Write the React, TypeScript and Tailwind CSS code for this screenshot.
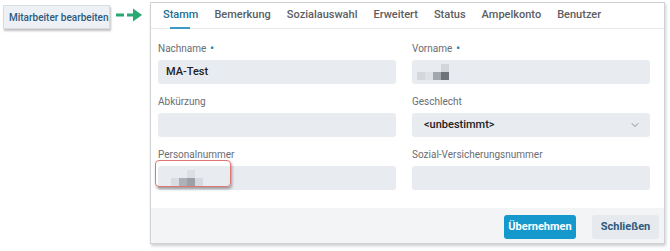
import { ChevronDown } from 'lucide-react';

const tabs = ['Stamm', 'Bemerkung', 'Sozialauswahl', 'Erweitert', 'Status', 'Ampelkonto', 'Benutzer'];

// pixelated "blurred" value, cells of 8px
function Blur({ cells }: { cells: (string | null)[][] }) {
  return (
    <div className="flex flex-col">
      {cells.map((row, i) => (
        <div key={i} className="flex">
          {row.map((c, j) => (
            <div key={j} className="w-[8px] h-[8px]" style={{ background: c ?? 'transparent' }} />
          ))}
        </div>
      ))}
    </div>
  );
}

function Label({ text, required }: { text: string; required?: boolean }) {
  return (
    <div className="h-[14px] leading-[14px] text-[10px] text-[#6a6d72] mb-[4px] whitespace-nowrap">
      {text}
      {required && <span className="text-[#1d7ba6] ml-[4px] font-bold">•</span>}
    </div>
  );
}

export default function App() {
  return (
    <div className="w-[670px] h-[251px] bg-white flex font-['Roboto',sans-serif] overflow-hidden">
      {/* ─── Callout ─────────────────────────────────────────── */}
      <div className="w-[150px] shrink-0 flex items-start pt-[5px] pl-[3px]">
        <div className="h-[24px] w-[107px] shrink-0 bg-[#edf1f5] border border-[#d9dde2] shadow-[1px_2px_2px_rgba(0,0,0,0.25)] flex items-center pl-[5px] text-[10px] font-medium text-[#2c5a80] whitespace-nowrap">
          Mitarbeiter bearbeiten
        </div>
        <svg width="30" height="14" viewBox="0 0 30 14" className="ml-[6px] mt-[3px] shrink-0">
          <rect x="0" y="5.5" width="8" height="3" fill="#2aa873" />
          <rect x="11" y="5.5" width="8" height="3" fill="#2aa873" />
          <polygon points="17,0.5 26,7 17,13.5" fill="#2aa873" />
        </svg>
      </div>

      {/* ─── Dialog ──────────────────────────────────────────── */}
      <div className="mt-[2px] w-[515px] h-[242px] border border-[#cfd1d4] shadow-[1px_2px_3px_rgba(0,0,0,0.2)] flex flex-col">
        <div className="h-[26px] border-b border-[#e8eaec] flex items-stretch pl-[12px] gap-[16px]">
          {tabs.map((t, i) => (
            <div
              key={t}
              className={
                'relative flex items-center text-[11px] font-medium pb-[1px] ' +
                (i === 0 ? 'text-[#236f94]' : 'text-[#5b5e63]')
              }
            >
              {t}
              {i === 0 && <div className="absolute bottom-[-1px] left-[7px] right-[8px] h-[2px] bg-[#3d9bc6]" />}
            </div>
          ))}
        </div>

        <div className="grid grid-cols-2 gap-x-[16px] gap-y-[11px] pl-[7px] pr-[14px] pt-[13px]">
          <div>
            <Label text="Nachname" required />
            <div className="h-[24px] rounded-[3px] bg-[#e8ebef] flex items-center pl-[8px] text-[11px] font-medium text-[#222]">
              MA-Test
            </div>
          </div>
          <div>
            <Label text="Vorname" required />
            <div className="h-[24px] rounded-[3px] bg-[#e8ebef] flex items-center pl-[5px]">
              <Blur
                cells={[
                  [null, null, null, '#d3d6da'],
                  ['#d4d7db', '#dfe2e5', '#a3a7ad', '#6f747b'],
                ]}
              />
            </div>
          </div>
          <div>
            <Label text="Abkürzung" />
            <div className="h-[24px] rounded-[3px] bg-[#e8ebef]" />
          </div>
          <div>
            <Label text="Geschlecht" />
            <div className="h-[24px] rounded-[3px] bg-[#e8ebef] flex items-center justify-between pl-[12px] pr-[9px] text-[11px] font-medium text-[#222]">
              &lt;unbestimmt&gt;
              <ChevronDown className="w-[12px] h-[12px] text-[#777]" strokeWidth={1.6} />
            </div>
          </div>
          <div>
            <Label text="Personalnummer" />
            <div className="relative h-[24px] rounded-[3px] bg-[#e8ebef] flex items-center pl-[13px]">
              <Blur
                cells={[
                  [null, null, '#dcdfe3', null],
                  ['#d9dce0', '#aeb1b6', '#9da1a7', '#d6d9dd'],
                ]}
              />
              <div className="absolute left-[-3px] top-[-6px] w-[76px] h-[27px] rounded-[4px] border-[1.5px] border-[#e07575] shadow-[1px_2px_3px_rgba(0,0,0,0.35)]" />
            </div>
          </div>
          <div>
            <Label text="Sozial-Versicherungsnummer" />
            <div className="h-[24px] rounded-[3px] bg-[#e8ebef]" />
          </div>
        </div>

        <div className="flex-1" />

        <div className="h-[35px] bg-[#f3f4f6] flex items-start justify-end pt-[7px] pr-[5px] gap-[16px]">
          <button className="h-[24px] w-[72px] rounded-[3px] bg-[#1598cb] text-white text-[11px] font-bold">
            Übernehmen
          </button>
          <button className="h-[24px] w-[67px] rounded-[3px] bg-[#e6e9ed] text-[#2c5a80] text-[11px] font-bold">
            Schließen
          </button>
        </div>
      </div>
    </div>
  );
}
